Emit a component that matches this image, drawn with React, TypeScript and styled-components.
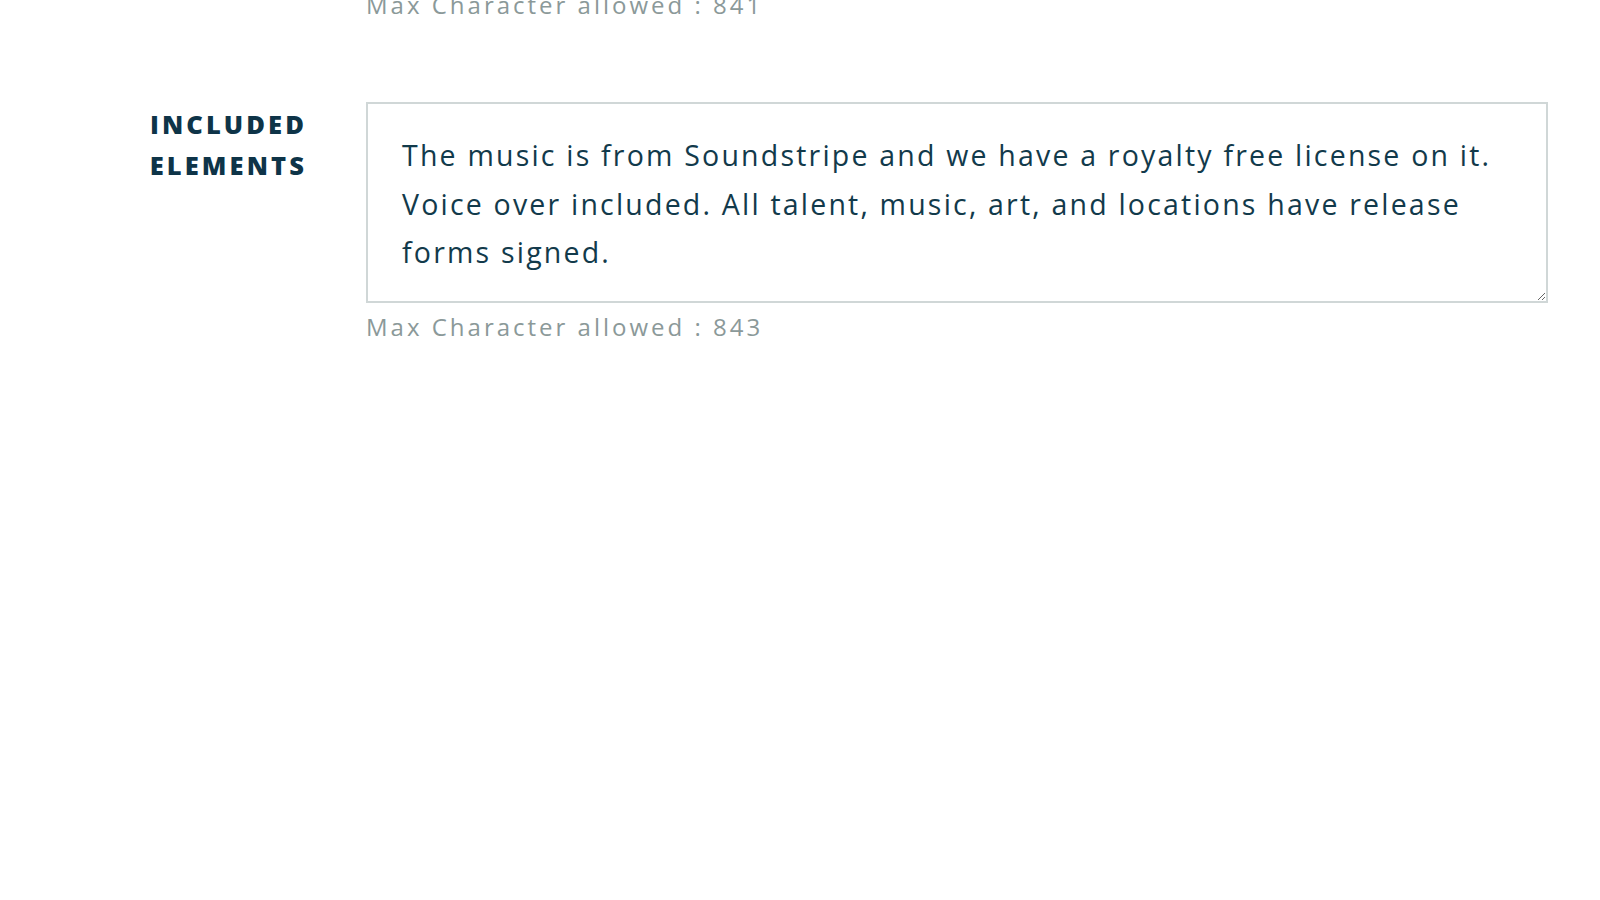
import React from "react";
import styled, { createGlobalStyle } from "styled-components";

const GlobalStyle = createGlobalStyle`
  html, body {
    margin: 0;
    padding: 0;
    background: #ffffff;
    overflow: hidden;
  }
  body {
    font-family: "Open Sans", "Liberation Sans", sans-serif;
  }
`;

const Form = styled.div`
  display: flex;
  flex-direction: column;
  margin-top: -19px;
  width: 1600px;
`;

const Row = styled.div`
  display: grid;
  grid-template-columns: 304px 1182px;
  column-gap: 62px;
  margin-bottom: 80px;
`;

const Label = styled.label`
  text-align: right;
  font-family: "Open Sans", sans-serif;
  font-weight: 800;
  font-size: 25.5px;
  line-height: 41px;
  letter-spacing: 3.1px;
  color: #0e3448;
  text-transform: uppercase;
  padding-top: 2px;
  margin-right: -3px;
`;

const Field = styled.div`
  display: flex;
  flex-direction: column;
`;

const TextArea = styled.textarea`
  box-sizing: border-box;
  width: 1182px;
  height: 201px;
  margin: 0;
  border: 2px solid #d0d7d7;
  border-radius: 0;
  padding: 27px 34px;
  font-family: "Open Sans", sans-serif;
  font-size: 28.5px;
  line-height: 48.5px;
  letter-spacing: 2.2px;
  color: #123a4b;
  resize: vertical;
  outline: none;
  background: #fff;
`;

const Hint = styled.div`
  font-family: "Open Sans", sans-serif;
  font-size: 24px;
  line-height: 34px;
  letter-spacing: 3px;
  color: #8b9999;
  margin-top: 7px;
`;

export default function App() {
  return (
    <>
      <GlobalStyle />
      <Form>
        <Row>
          <span />
          <Field>
            <Hint>Max Character allowed : 841</Hint>
          </Field>
        </Row>
        <Row>
          <Label>
            Included
            <br />
            Elements
          </Label>
          <Field>
            <TextArea
              defaultValue="The music is from Soundstripe and we have a royalty free license on it. Voice over included. All talent, music, art, and locations have release forms signed."
            />
            <Hint>Max Character allowed : 843</Hint>
          </Field>
        </Row>
      </Form>
    </>
  );
}
